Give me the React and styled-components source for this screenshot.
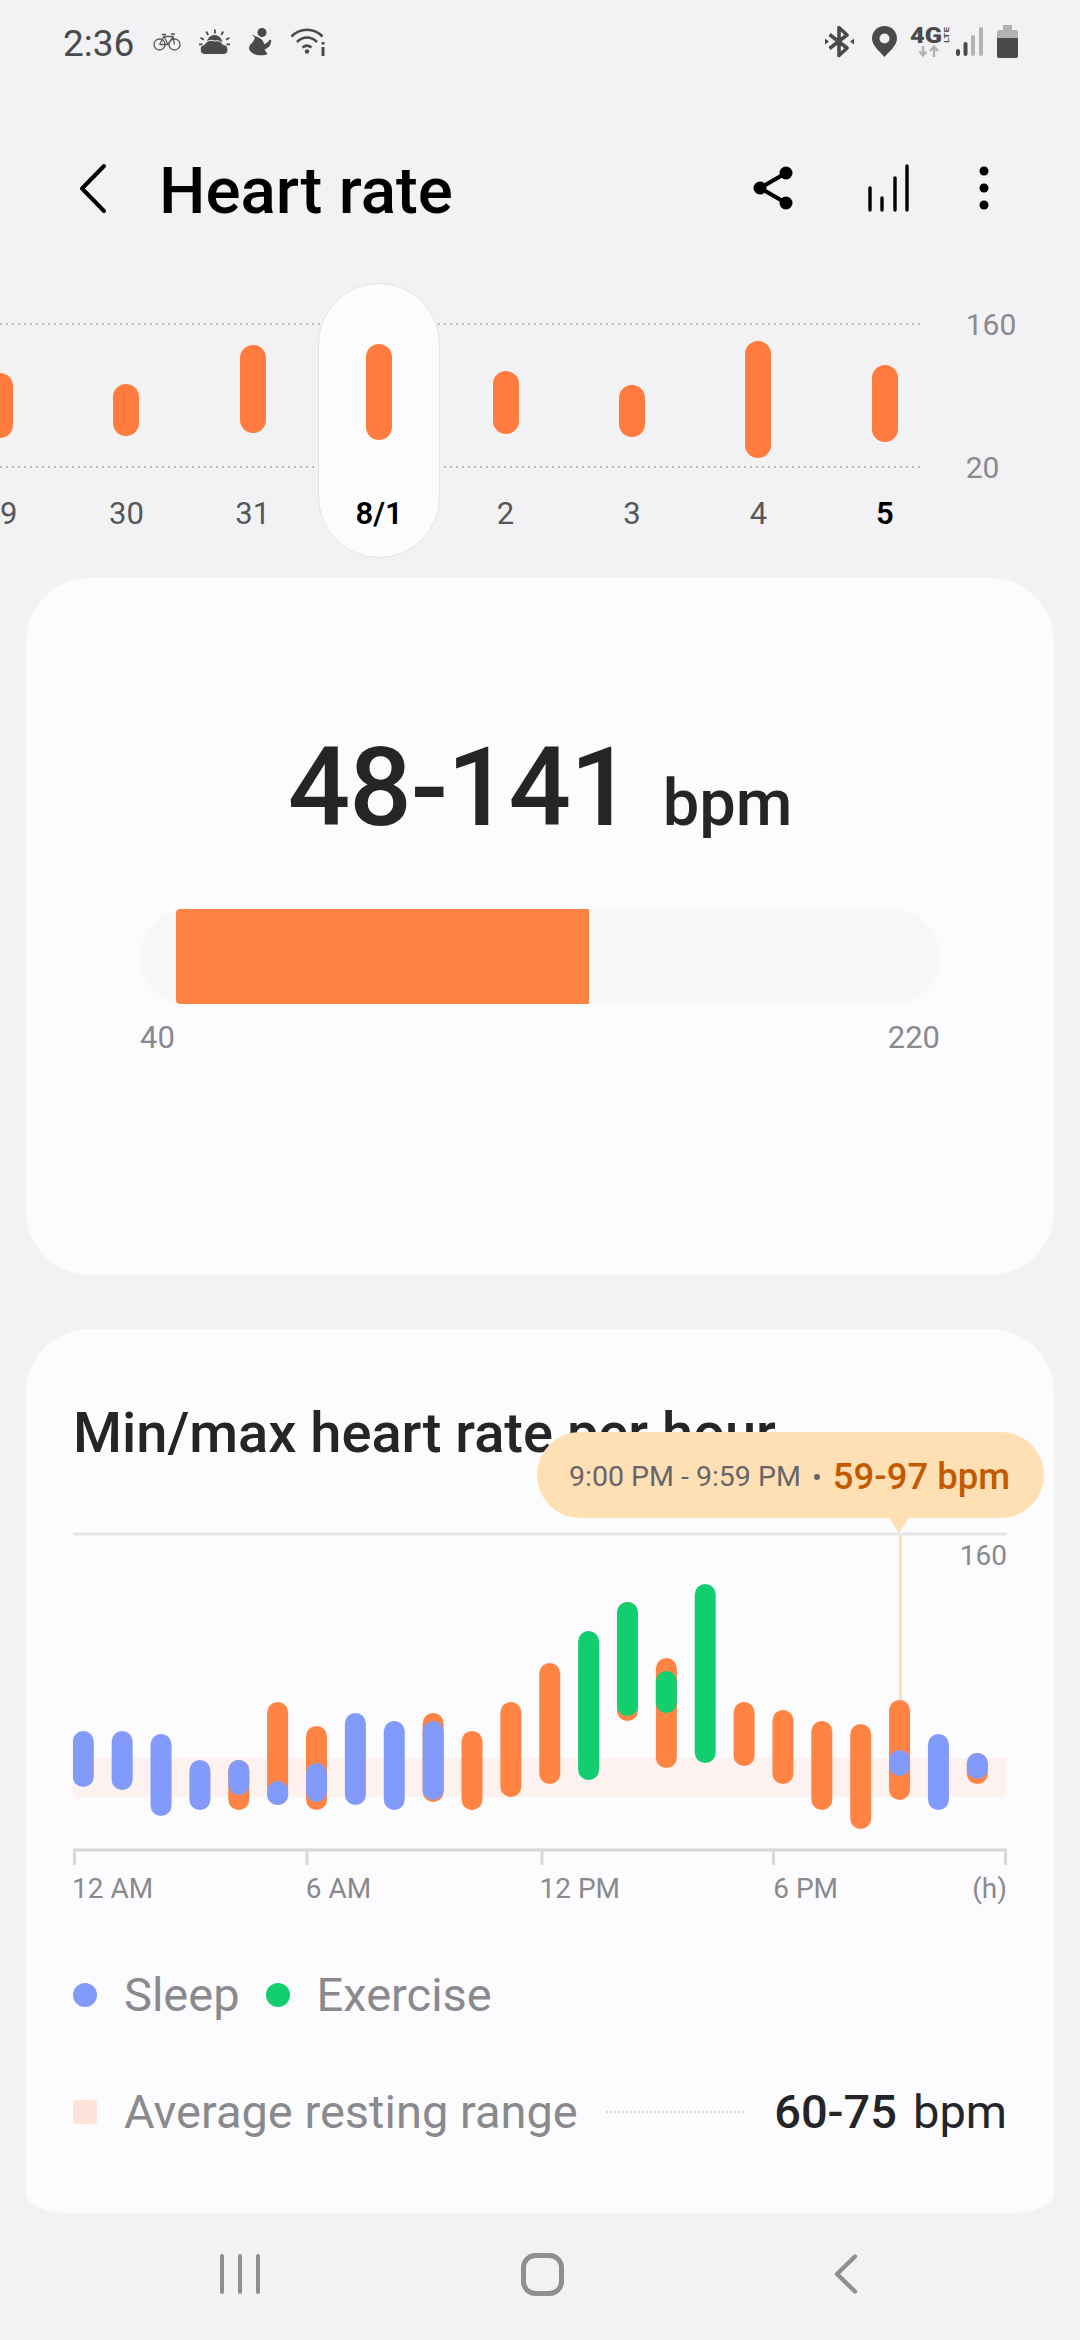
import React from 'react';
import styled, {createGlobalStyle} from 'styled-components';

const colors = {
  page: '#f2f2f4',
  card: '#fcfcfe',
  ink: '#252527',
  muted: '#8a8a8e',
  icon: '#4a4a4a',
  faint: '#b2b2b2',
  trend: '#ff7b3e',
  orange: '#ff8444',
  blue: '#829afa',
  green: '#12ce6f',
  peach: '#ffe0b5'
};

const GlobalStyle = createGlobalStyle`
  html, body {
    margin: 0;
    padding: 0;
    background: ${colors.page};
    font-family: Roboto, "Liberation Sans", sans-serif;
  }
`;

const Page = styled.div`
  width: 1080px;
  height: 2340px;
  overflow: hidden;
  display: flex;
  flex-direction: column;
  background: ${colors.page};
`;

const StatusBar = styled.div`
  height: 86px;
  flex: none;
  display: flex;
  align-items: center;
  padding: 0 62px 0 63px;
  box-sizing: border-box;
`;

const Time = styled.span`
  font-size: 37px;
  color: ${colors.icon};
  margin-right: 19px;
`;

const StatusGroup = styled.div`
  display: flex;
  align-items: center;
  padding-bottom: 3px;
  margin-left: ${p => (p.$right ? 'auto' : '0')};
  svg {
    display: block;
  }
`;

const Spacer = styled.span`
  flex: none;
  width: ${p => p.$width}px;
`;

const Header = styled.div`
  height: 197px;
  flex: none;
  box-sizing: border-box;
  padding: 7px 91px 0 79px;
  display: flex;
  align-items: center;
`;

const Title = styled.h1`
  margin: 4px 0 0 52px;
  font-size: 65.5px;
  font-weight: 500;
  color: #000;
`;

const HeaderActions = styled.div`
  margin-left: auto;
  display: flex;
  align-items: center;
  svg {
    display: block;
  }
`;

const Trend = styled.div`
  height: 275px;
  flex: none;
  position: relative;
  display: flex;
  &::before,
  &::after {
    content: '';
    position: absolute;
    left: 0;
    width: 923px;
    height: 2px;
    background: repeating-linear-gradient(90deg, #bbbbbb 0 2px, transparent 2px 6px);
  }
  &::before {
    top: 40px;
  }
  &::after {
    top: 183px;
  }
`;

const Days = styled.div`
  display: flex;
  gap: 4.4px;
  margin-left: -61px;
  position: relative;
  z-index: 1;
`;

const Day = styled.div`
  width: 122px;
  height: 275px;
  box-sizing: border-box;
  display: flex;
  flex-direction: column;
  align-items: center;
  border-radius: 61px;
  border: 1px solid ${p => (p.$selected ? '#e4e4e6' : 'transparent')};
  background: ${p => (p.$selected ? colors.card : 'transparent')};
`;

const DaySlot = styled.div`
  height: 207px;
  flex: none;
`;

const DayBar = styled.div`
  width: 26px;
  border-radius: 13px;
  background: ${colors.trend};
`;

const DayLabel = styled.div`
  font-size: 31px;
  line-height: 46px;
  font-weight: ${p => (p.$strong ? 600 : 400)};
  color: ${p => (p.$strong ? '#000' : '#57575a')};
`;

const TrendAxis = styled.div`
  margin-left: 20px;
  padding-top: 27px;
  position: relative;
  z-index: 1;
  font-size: 30px;
  line-height: 30px;
  color: ${colors.muted};
  div + div {
    margin-top: 113px;
  }
`;

const Card = styled.section`
  flex: none;
  margin: 0 26px;
  background: ${colors.card};
  box-sizing: border-box;
`;

const SummaryCard = styled(Card)`
  margin-top: 20px;
  height: 697px;
  border-radius: 64px;
  padding: 150px 114px 0;
`;

const RangeRow = styled.div`
  height: 120px;
  margin-bottom: 61px;
  display: flex;
  align-items: baseline;
  justify-content: center;
  gap: 31px;
  color: ${colors.ink};
`;

const RangeValue = styled.span`
  font-size: 110px;
  line-height: 120px;
  font-weight: 500;
  letter-spacing: -1px;
`;

const RangeUnit = styled.span`
  font-size: 65px;
  font-weight: 500;
`;

const Track = styled.div`
  height: 95px;
  border-radius: 48px;
  background: #f7f7f9;
  display: flex;
`;

const TrackFill = styled.div`
  background: ${colors.orange};
  border-radius: 4px 0 0 4px;
`;

const TrackLabels = styled.div`
  margin-top: 16px;
  display: flex;
  justify-content: space-between;
  font-size: 31px;
  line-height: 36px;
  color: ${colors.muted};
`;

const HourlyCard = styled(Card)`
  margin-top: 54px;
  height: 884px;
  padding: 74px 47px 0;
  border-radius: 64px 64px 43px 43px / 64px 64px 20px 20px;
`;

const CardTitle = styled.h2`
  margin: 0 0 69px;
  font-size: 56px;
  line-height: 60px;
  font-weight: 500;
  color: ${colors.ink};
  white-space: nowrap;
`;

const Chart = styled.div`
  position: relative;
  height: 333px;
  svg {
    display: block;
  }
`;

const Tooltip = styled.div`
  position: absolute;
  left: 464px;
  top: -100px;
  width: 507px;
  height: 86px;
  box-sizing: border-box;
  padding: 3px 0 0 32px;
  border-radius: 43px;
  background: ${colors.peach};
  display: flex;
  align-items: center;
  white-space: nowrap;
  &::after {
    content: '';
    position: absolute;
    left: 352px;
    top: 86px;
    border-left: 10.5px solid transparent;
    border-right: 10.5px solid transparent;
    border-top: 15px solid ${colors.peach};
  }
`;

const TooltipTime = styled.span`
  font-size: 28.5px;
  color: #66666a;
`;

const TooltipDot = styled.span`
  width: 6px;
  height: 6px;
  border-radius: 50%;
  margin: 0 13px;
  background: #66666a;
`;

const TooltipValue = styled.span`
  font-size: 36.5px;
  font-weight: 500;
  color: #c35a00;
`;

const ChartMax = styled.div`
  position: absolute;
  right: 0;
  top: 8px;
  font-size: 28px;
  line-height: 32px;
  color: ${colors.muted};
`;

const AxisLabels = styled.div`
  margin-top: 7px;
  margin-left: -1px;
  display: grid;
  grid-template-columns: repeat(4, 1fr);
  font-size: 28px;
  line-height: 34px;
  color: ${colors.muted};
`;

const AxisLast = styled.div`
  display: flex;
  justify-content: space-between;
`;

const LegendRow = styled.div`
  display: flex;
  align-items: center;
  font-size: 47px;
  line-height: 52px;
  color: ${colors.muted};
  margin-top: ${p => p.$top}px;
`;

const Swatch = styled.span`
  width: 24px;
  height: 24px;
  flex: none;
  border-radius: ${p => (p.$square ? '3px' : '50%')};
  background: ${p => p.$color};
  margin: 0 27px 0 ${p => p.$left || 0}px;
`;

const Leader = styled.span`
  flex: 1;
  height: 2px;
  margin: 0 28px;
  background: repeating-linear-gradient(90deg, #d9d9db 0 2px, transparent 2px 4px);
`;

const RestingValue = styled.span`
  color: ${colors.ink};
  font-weight: 500;
  white-space: nowrap;
`;

const RestingUnit = styled.span`
  font-weight: 400;
  margin-left: 16px;
`;

const NavBar = styled.div`
  flex: 1;
  display: flex;
  align-items: center;
  box-sizing: border-box;
  padding: 0 0 5px 88px;
`;

const NavSlot = styled.div`
  width: 303px;
  display: flex;
  justify-content: center;
  svg {
    display: block;
  }
`;

const days = [
  {label: '29', top: 89, height: 65},
  {label: '30', top: 100, height: 52},
  {label: '31', top: 61, height: 88},
  {label: '8/1', top: 60, height: 96, selected: true, strong: true},
  {label: '2', top: 87, height: 63},
  {label: '3', top: 101, height: 52},
  {label: '4', top: 57, height: 117},
  {label: '5', top: 81, height: 77, strong: true}
];

// y values are page pixels, the chart viewBox starts at 1532
const hours = [
  {color: 'blue', from: 1731, to: 1787},
  {color: 'blue', from: 1731, to: 1790},
  {color: 'blue', from: 1734, to: 1816},
  {color: 'blue', from: 1760, to: 1810},
  {color: 'orange', from: 1760, to: 1810, over: 'blue', overFrom: 1760, overTo: 1795},
  {color: 'orange', from: 1702, to: 1805, over: 'blue', overFrom: 1781, overTo: 1805},
  {color: 'orange', from: 1726, to: 1810, over: 'blue', overFrom: 1763, overTo: 1802},
  {color: 'blue', from: 1713, to: 1805},
  {color: 'blue', from: 1721, to: 1810},
  {color: 'orange', from: 1713, to: 1802, over: 'blue', overFrom: 1721, overTo: 1800},
  {color: 'orange', from: 1731, to: 1810},
  {color: 'orange', from: 1702, to: 1797},
  {color: 'orange', from: 1663, to: 1784},
  {color: 'green', from: 1631, to: 1780},
  {color: 'orange', from: 1602, to: 1721, over: 'green', overFrom: 1602, overTo: 1716},
  {color: 'orange', from: 1658, to: 1768, over: 'green', overFrom: 1671, overTo: 1713},
  {color: 'green', from: 1584, to: 1763},
  {color: 'orange', from: 1702, to: 1766},
  {color: 'orange', from: 1710, to: 1784},
  {color: 'orange', from: 1721, to: 1810},
  {color: 'orange', from: 1724, to: 1829},
  {color: 'orange', from: 1700, to: 1800, over: 'blue', overFrom: 1750, overTo: 1776},
  {color: 'blue', from: 1734, to: 1810},
  {color: 'orange', from: 1753, to: 1784, over: 'blue', overFrom: 1753, overTo: 1779}
];

const BAR_W = 21;
const hourX = i => 83.3 + i * 38.87;

const HourBar = ({x, from, to, color}) => (
  <rect x={x - BAR_W / 2} y={from} width={BAR_W} height={to - from} rx={BAR_W / 2} fill={colors[color]} />
);

const HourlyPlot = () => (
  <svg width="934" height="333" viewBox="73 1532 934 333">
    <rect x="73" y="1532.5" width="934" height="3" fill="#e6e6e9" />
    <rect x="73" y="1758" width="934" height="39" rx="4" fill="#fdf2f0" />
    <rect x="899" y="1534" width="3" height="170" fill={colors.peach} />
    {hours.map((h, i) => (
      <g key={i}>
        <HourBar x={hourX(i)} from={h.from} to={h.to} color={h.color} />
        {h.over && <HourBar x={hourX(i)} from={h.overFrom} to={h.overTo} color={h.over} />}
      </g>
    ))}
    <rect x="73" y="1848.5" width="934" height="3" fill="#d8d8da" />
    {[73, 305.5, 540.5, 772, 1004].map(x => (
      <rect key={x} x={x} y="1849" width="3" height="16" fill="#d8d8da" />
    ))}
  </svg>
);

const BikeIcon = () => (
  <svg width="28" height="18" viewBox="0 0 28 18" fill="none" stroke="#5a5a5a" strokeWidth="1.300">
    <circle cx="6.500" cy="11.500" r="5.500" />
    <circle cx="21.500" cy="11.500" r="5.500" />
    <path d="M6.500 11.500 11 3.500h9l1.500 8M11 3.500l4 8H6.500M20 3.500 15 11.500M9 1.500h4M18 1h4" />
  </svg>
);

const WeatherIcon = () => (
  <svg width="31" height="26" viewBox="0 0 31 26" fill={colors.icon}>
    <path d="M8 13.500a7.500 7.500 0 0 1 15 0z" />
    <path d="M15 0.500h1.800v4H15zM6.500 3l1.500-.9 2 3.400-1.500.9zM23.500 2.100 25 3l-2 3.400-1.500-.9zM1 9.500l.9-1.500 3.400 2-.9 1.500zM26.600 10l3.400-2 .9 1.500-3.400 2zM0 14.500h3.500v1.800H0zM27.500 14.500H31v1.800h-3.500z" />
    <path d="M6 25.500a5 5 0 0 1-.8-9.900A8 8 0 0 1 15.500 12a7 7 0 0 1 8.500 3.600 5 5 0 0 1 1 9.900z" stroke={colors.page} strokeWidth="1" />
  </svg>
);

const ActivityIcon = () => (
  <svg width="24" height="28" viewBox="0 0 24 28" fill={colors.icon}>
    <circle cx="13" cy="4.500" r="4.500" />
    <path d="M3 6.500 9.500 9.500c3.500 1.500 5.500 4 5.500 6.500 2.500-.5 4.500-2 5.500-4.500l1.800.8C22 17.500 19 20.500 15.500 21.500l3 4.500c-2 1.500-10 2-13.500 0-3-1.500-5-4-5-5.500 0-4 3.500-5 5-8.500.5-1 1-2 .5-3z" />
  </svg>
);

const WifiIcon = () => (
  <svg width="36" height="29" viewBox="0 0 36 29" fill="none" stroke={colors.icon} strokeWidth="2.600">
    <path d="M1.500 9.500C10.500 0.500 23.500 0.500 32.500 9.500" />
    <path d="M7 15c6-6 14-6 20 0" />
    <path d="M12.500 20.500c3-2.500 6-2.500 9 0" />
    <circle cx="17" cy="24.500" r="2.200" fill={colors.icon} stroke="none" />
    <path d="M33 15v2.500M33 20v9" strokeWidth="3" />
  </svg>
);

const BluetoothIcon = () => (
  <svg width="29" height="33" viewBox="0 0 29 33" fill={colors.icon}>
    <path d="M4.500 9.500 22 23l-8 7.500V2.500l8 7.500L4.500 23.500" fill="none" stroke={colors.icon} strokeWidth="3.600" strokeLinejoin="round" />
    <path d="M0 13.500v6l4-3zM29 13.500v6l-4-3z" />
  </svg>
);

const PinIcon = () => (
  <svg width="25" height="31" viewBox="0 0 25 31" fill={colors.icon}>
    <path fillRule="evenodd" d="M12.500 0C5.600 0 0 5.500 0 12.300 0 20 8 25.500 12.500 31 17 25.500 25 20 25 12.300 25 5.500 19.400 0 12.500 0zm0 7.500a5 5 0 1 1 0 10 5 5 0 0 1 0-10z" />
  </svg>
);

const NetworkIcon = () => (
  <svg width="42" height="31" viewBox="0 0 42 31" overflow="visible">
    <text x="0" y="17" fontFamily="Roboto, sans-serif" fontSize="22" fontWeight="900" fill={colors.icon} textLength="32" lengthAdjust="spacingAndGlyphs">4G</text>
    <text transform="translate(38.500 17) rotate(-90)" fontFamily="Roboto, sans-serif" fontSize="8" fontWeight="700" fill={colors.icon} textLength="16" lengthAdjust="spacingAndGlyphs">LTE</text>
    <path d="M13 20v9M9.500 25.500 13 29.500l3.500-4" fill="none" stroke={colors.faint} strokeWidth="2.400" />
    <path d="M24 31V21M20 25l4-4.500 4 4.500" fill="none" stroke={colors.faint} strokeWidth="2.400" />
  </svg>
);

const SignalIcon = () => (
  <svg width="27" height="29" viewBox="0 0 27 29">
    <rect x="0" y="22" width="4" height="7" rx="2" fill={colors.icon} />
    <rect x="7.500" y="15" width="4" height="14" rx="2" fill={colors.icon} />
    <rect x="15" y="8" width="4" height="21" rx="2" fill={colors.faint} />
    <rect x="23" y="0" width="4" height="29" rx="2" fill={colors.faint} />
  </svg>
);

const BatteryIcon = () => (
  <svg width="21" height="33" viewBox="0 0 21 33">
    <path d="M6 0h9v5h4a2 2 0 0 1 2 2v6H0V7a2 2 0 0 1 2-2h4z" fill={colors.faint} />
    <path d="M0 13h21v18a2 2 0 0 1-2 2H2a2 2 0 0 1-2-2z" fill={colors.icon} />
  </svg>
);

const BackIcon = () => (
  <svg width="28" height="51" viewBox="0 0 28 51" fill="none" stroke="#000" strokeWidth="4" strokeLinecap="round" strokeLinejoin="round">
    <path d="M25 3 3 25.500 25 48" />
  </svg>
);

const ShareIcon = () => (
  <svg width="40" height="44" viewBox="0 0 40 44" fill="#000" stroke="#000">
    <path d="M33 7 7 22l26 15" fill="none" strokeWidth="4" />
    <circle cx="33" cy="7" r="6.500" strokeWidth="0" />
    <circle cx="7" cy="22" r="6.500" strokeWidth="0" />
    <circle cx="33" cy="37" r="6.500" strokeWidth="0" />
  </svg>
);

const BarsIcon = () => (
  <svg width="42" height="48" viewBox="0 0 42 48" fill="none" stroke="#000" strokeWidth="3.400" strokeLinecap="round">
    <path d="M3 46V24M15 46V34M28 46V14M40 46V2" />
  </svg>
);

const MoreIcon = () => (
  <svg width="10" height="44" viewBox="0 0 10 44" fill="#000">
    <circle cx="5" cy="5" r="4.500" />
    <circle cx="5" cy="22" r="4.500" />
    <circle cx="5" cy="39" r="4.500" />
  </svg>
);

const RecentsIcon = () => (
  <svg width="42" height="40" viewBox="0 0 42 40" fill="none" stroke="#8f8f92" strokeWidth="4" strokeLinecap="round">
    <path d="M3 2v36M21 2v36M39 2v36" />
  </svg>
);

const HomeIcon = () => (
  <svg width="43" height="43" viewBox="0 0 43 43" fill="none" stroke="#8f8f92" strokeWidth="5">
    <rect x="2.500" y="2.500" width="38" height="38" rx="12" />
  </svg>
);

const NavBackIcon = () => (
  <svg width="24" height="40" viewBox="0 0 24 40" fill="none" stroke="#8f8f92" strokeWidth="4.400" strokeLinecap="round" strokeLinejoin="round">
    <path d="M21 2.500 3 20l18 17.500" />
  </svg>
);

const RANGE_MIN = 40;
const RANGE_MAX = 220;
const rangeWidth = 800;
const pct = v => ((v - RANGE_MIN) / (RANGE_MAX - RANGE_MIN)) * rangeWidth;

const App = () => (
  <Page>
    <GlobalStyle />
    <StatusBar>
      <Time>2:36</Time>
      <StatusGroup>
        <BikeIcon />
        <Spacer $width={18} />
        <WeatherIcon />
        <Spacer $width={19} />
        <ActivityIcon />
        <Spacer $width={17} />
        <WifiIcon />
      </StatusGroup>
      <StatusGroup $right>
        <BluetoothIcon />
        <Spacer $width={18} />
        <PinIcon />
        <Spacer $width={13} />
        <NetworkIcon />
        <Spacer $width={4} />
        <SignalIcon />
        <Spacer $width={14} />
        <BatteryIcon />
      </StatusGroup>
    </StatusBar>

    <Header>
      <BackIcon />
      <Title>Heart rate</Title>
      <HeaderActions>
        <ShareIcon />
        <Spacer $width={74} />
        <BarsIcon />
        <Spacer $width={70} />
        <MoreIcon />
      </HeaderActions>
    </Header>

    <Trend>
      <Days>
        {days.map(d => (
          <Day key={d.label} $selected={d.selected}>
            <DaySlot>
              <DayBar style={{marginTop: d.top, height: d.height}} />
            </DaySlot>
            <DayLabel $strong={d.strong}>{d.label}</DayLabel>
          </Day>
        ))}
      </Days>
      <TrendAxis>
        <div>160</div>
        <div>20</div>
      </TrendAxis>
    </Trend>

    <SummaryCard>
      <RangeRow>
        <RangeValue>48-141</RangeValue>
        <RangeUnit>bpm</RangeUnit>
      </RangeRow>
      <Track>
        <TrackFill style={{marginLeft: pct(48), width: pct(141) - pct(48)}} />
      </Track>
      <TrackLabels>
        <span>40</span>
        <span>220</span>
      </TrackLabels>
    </SummaryCard>

    <HourlyCard>
      <CardTitle>Min/max heart rate per hour</CardTitle>
      <Chart>
        <HourlyPlot />
        <ChartMax>160</ChartMax>
        <Tooltip>
          <TooltipTime>9:00 PM - 9:59 PM</TooltipTime>
          <TooltipDot />
          <TooltipValue>59-97 bpm</TooltipValue>
        </Tooltip>
      </Chart>
      <AxisLabels>
        <span>12 AM</span>
        <span>6 AM</span>
        <span>12 PM</span>
        <AxisLast>
          <span>6 PM</span>
          <span>(h)</span>
        </AxisLast>
      </AxisLabels>
      <LegendRow $top={63}>
        <Swatch $color={colors.blue} />
        <span>Sleep</span>
        <Swatch $color={colors.green} $left={26} />
        <span>Exercise</span>
      </LegendRow>
      <LegendRow $top={65}>
        <Swatch $square $color="#fde3da" />
        <span>Average resting range</span>
        <Leader />
        <RestingValue>
          60-75<RestingUnit>bpm</RestingUnit>
        </RestingValue>
      </LegendRow>
    </HourlyCard>

    <NavBar>
      <NavSlot><RecentsIcon /></NavSlot>
      <NavSlot><HomeIcon /></NavSlot>
      <NavSlot><NavBackIcon /></NavSlot>
    </NavBar>
  </Page>
);

export default App;
